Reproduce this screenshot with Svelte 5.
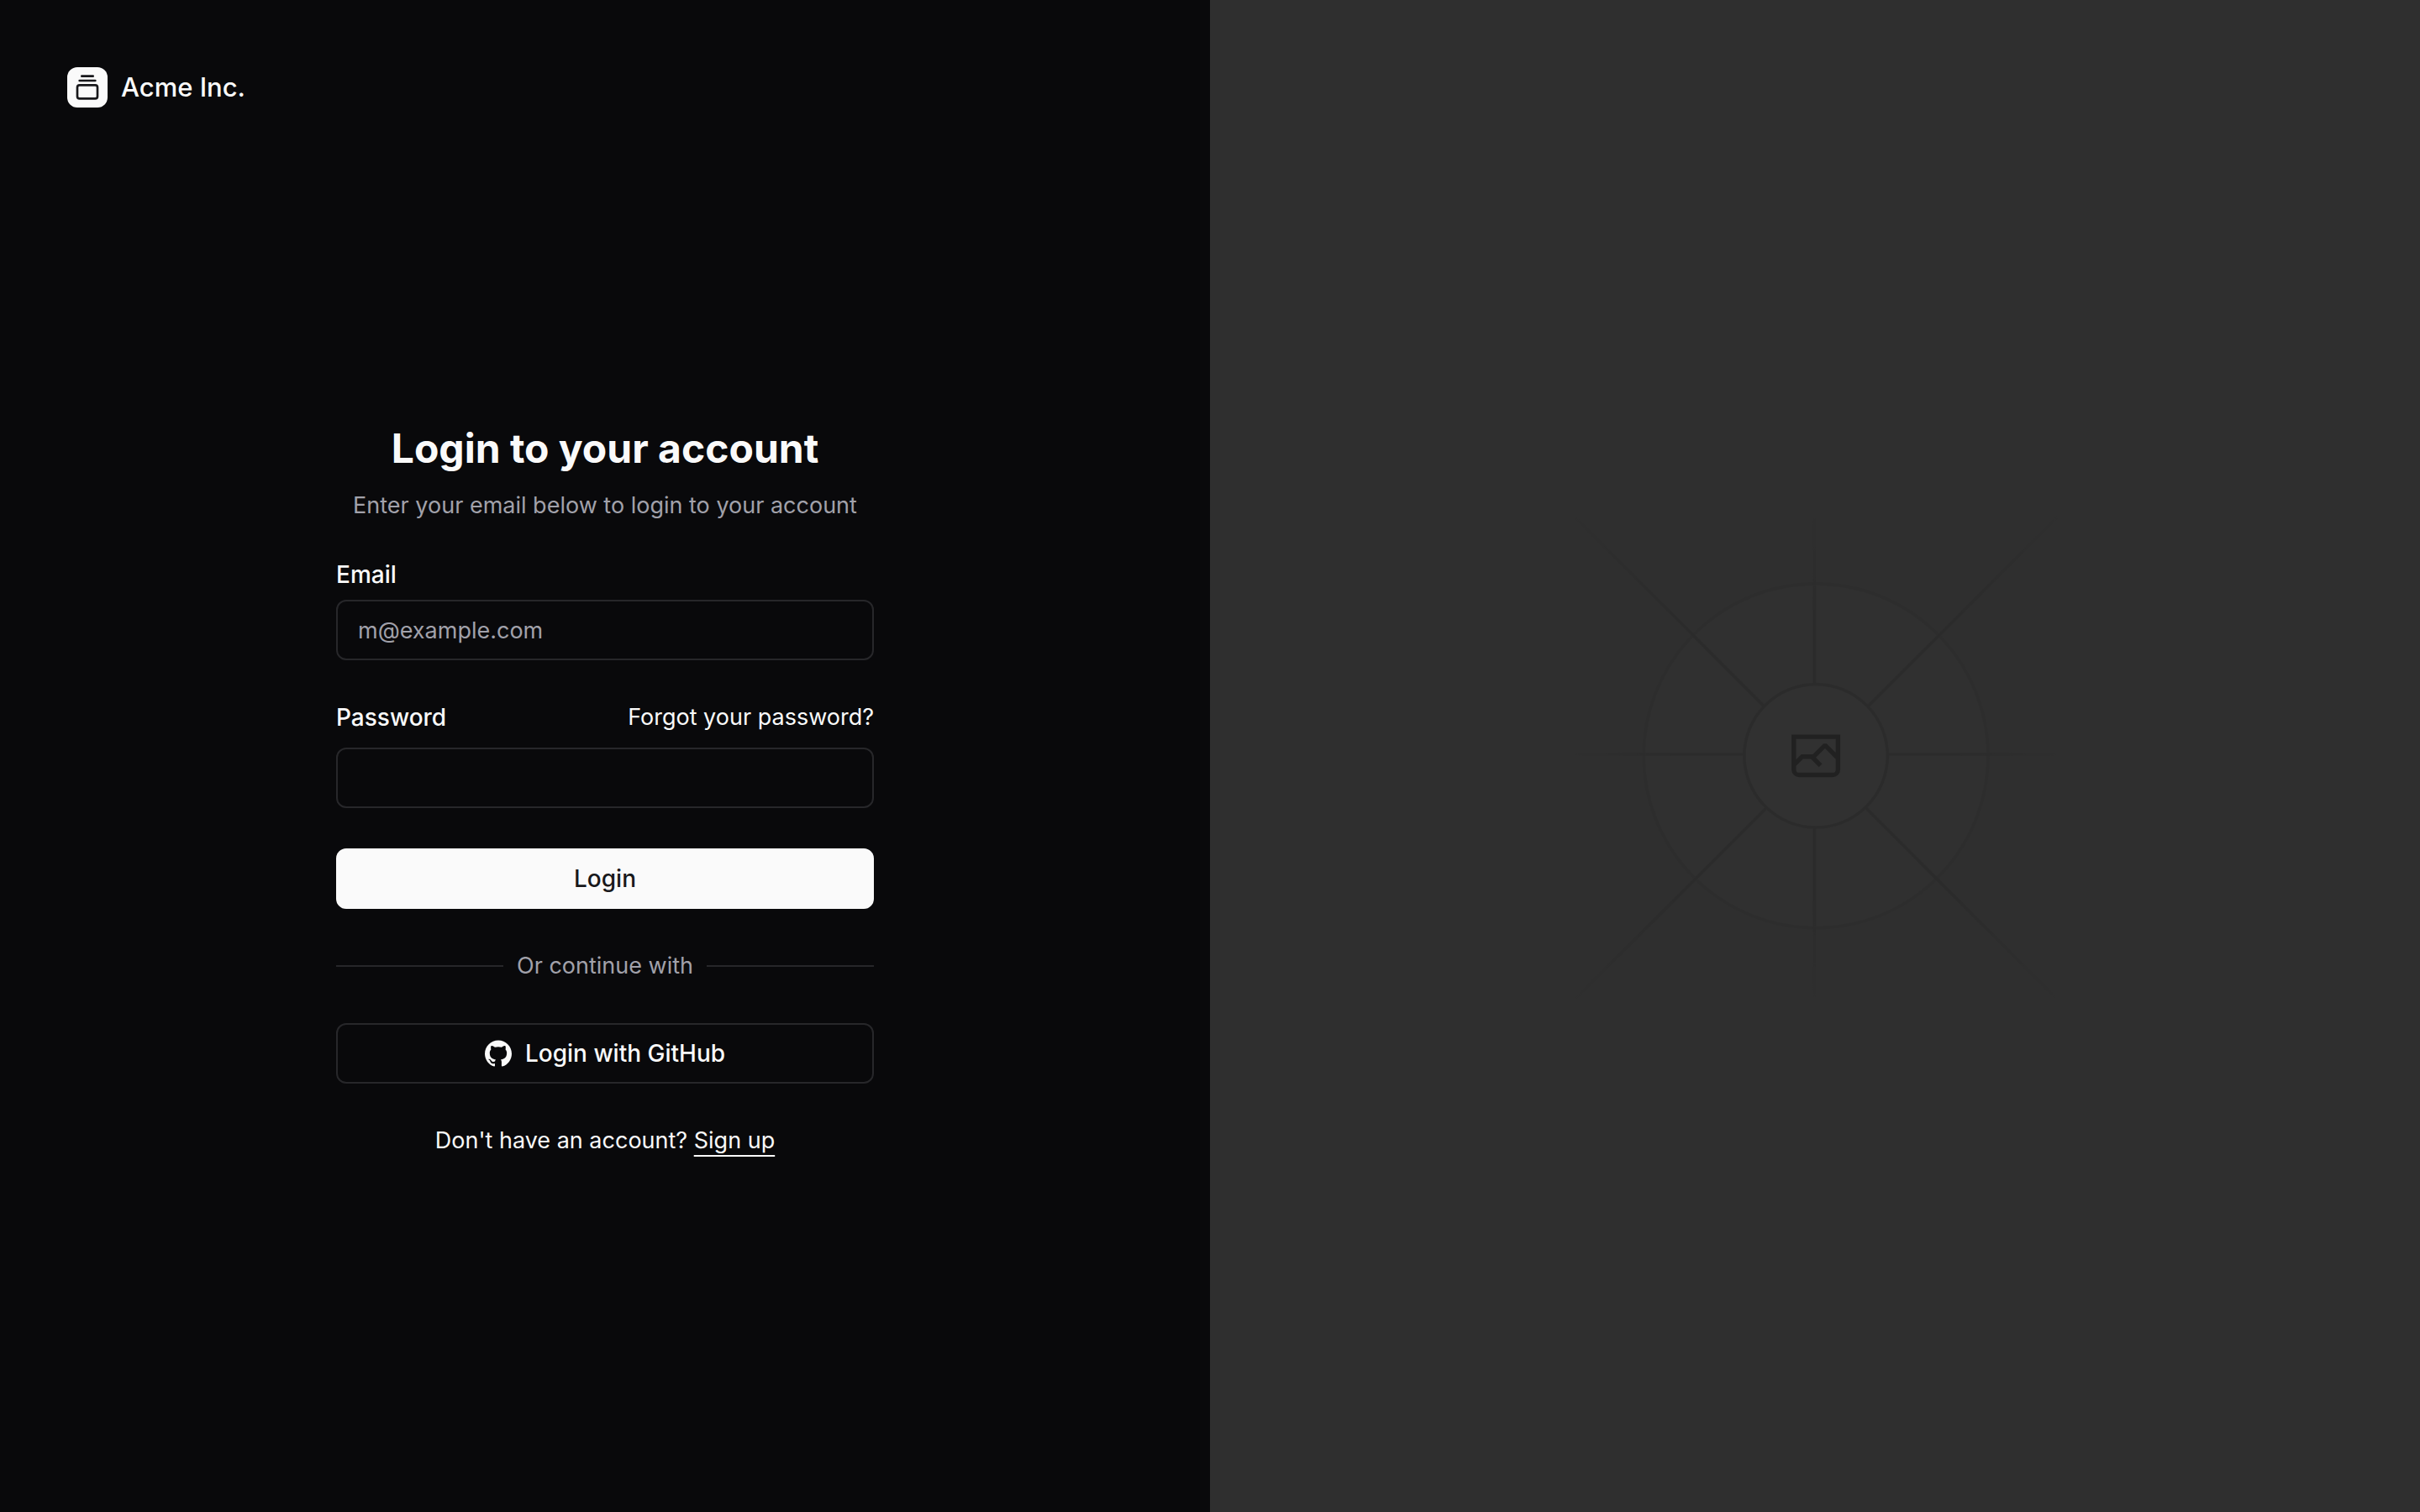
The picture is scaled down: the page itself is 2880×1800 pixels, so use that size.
<script>
  let email = $state('');
  let password = $state('');

  const fade = [
    [0, 0],
    [0.208, 1],
    [0.792, 1],
    [1, 0]
  ];
  const gradients = [
    { id: 'ray-rise', x1: 554.061, y1: 0.083, x2: -0.48, y2: 0.087 },
    { id: 'ray-across', x1: 796.912, y1: 599.963, x2: 404.507, y2: 599.965 },
    { id: 'ray-down', x1: 600.792, y1: 403.677, x2: 600.794, y2: 796.082 },
    { id: 'ray-fall', x1: 404.85, y1: 403.903, x2: 796.972, y2: 796.02 }
  ];
</script>

<div class="page">
  <div class="panel">
    <header>
      <a class="brand" href="#home">
        <span class="mark">
          <svg viewBox="0 0 24 24" fill="none" stroke="currentColor" stroke-width="2" stroke-linecap="round" stroke-linejoin="round" aria-hidden="true">
            <path d="M7 2h10" />
            <path d="M5 6h14" />
            <rect width="18" height="12" x="3" y="10" rx="2" />
          </svg>
        </span>
        Acme Inc.
      </a>
    </header>

    <main>
      <form onsubmit={(e) => e.preventDefault()}>
        <div class="intro">
          <h1>Login to your account</h1>
          <p>Enter your email below to login to your account</p>
        </div>

        <div class="field">
          <label for="email">Email</label>
          <input id="email" type="email" placeholder="m@example.com" bind:value={email} />
        </div>

        <div class="field">
          <div class="row">
            <label for="password">Password</label>
            <a href="#forgot">Forgot your password?</a>
          </div>
          <input id="password" type="password" bind:value={password} />
        </div>

        <button class="primary" type="submit">Login</button>

        <div class="divider"><span>Or continue with</span></div>

        <button class="outline" type="button">
          <svg viewBox="0 0 24 24" aria-hidden="true">
            <path fill="currentColor" d="M12 .297c-6.63 0-12 5.373-12 12 0 5.303 3.438 9.8 8.205 11.385.6.113.82-.258.82-.577 0-.285-.01-1.04-.015-2.04-3.338.724-4.042-1.61-4.042-1.61C4.422 18.07 3.633 17.7 3.633 17.7c-1.087-.744.084-.729.084-.729 1.205.084 1.838 1.236 1.838 1.236 1.07 1.835 2.809 1.305 3.495.998.108-.776.417-1.305.76-1.605-2.665-.3-5.466-1.332-5.466-5.93 0-1.31.465-2.38 1.235-3.22-.135-.303-.54-1.523.105-3.176 0 0 1.005-.322 3.3 1.23.96-.267 1.98-.399 3-.405 1.02.006 2.04.138 3 .405 2.28-1.552 3.285-1.23 3.285-1.23.645 1.653.24 2.873.12 3.176.765.84 1.23 1.91 1.23 3.22 0 4.61-2.805 5.625-5.475 5.92.42.36.81 1.096.81 2.22 0 1.606-.015 2.896-.015 3.286 0 .315.21.69.825.57C20.565 22.092 24 17.592 24 12.297c0-6.627-5.373-12-12-12" />
          </svg>
          Login with GitHub
        </button>

        <p class="signup">Don't have an account? <a href="#signup">Sign up</a></p>
      </form>
    </main>
  </div>

  <div class="cover">
    <svg viewBox="0 0 1200 1200" preserveAspectRatio="xMidYMid slice" fill="none" role="img" aria-label="Placeholder">
      <defs>
        {#each gradients as g (g.id)}
          <linearGradient id={g.id} x1={g.x1} y1={g.y1} x2={g.x2} y2={g.y2} gradientUnits="userSpaceOnUse">
            {#each fade as [offset, opacity]}
              <stop {offset} stop-color="#c9c9c9" stop-opacity={opacity} />
            {/each}
          </linearGradient>
        {/each}
      </defs>
      <rect width="1200" height="1200" fill="#eaeaea" />
      <g opacity=".5" stroke-width="2.418">
        <circle cx="600.709" cy="599.88" r="136.62" fill="#fafafa" stroke="#c9c9c9" opacity=".5" />
        <path stroke="url(#ray-rise)" d="M0-1.209h553.581" transform="scale(1 -1) rotate(45 1163.11 91.165)" />
        <path stroke="url(#ray-across)" d="M404.846 598.671h391.726" />
        <path stroke="url(#ray-down)" d="M599.5 795.742V404.017" />
        <path stroke="url(#ray-fall)" d="m795.717 796.597-391.441-391.44" />
        <circle cx="600.709" cy="599.88" r="56.824" fill="#fff" />
        <path fill="#666" fill-rule="evenodd" d="M616.426 586.58h-31.434v16.176l3.553-3.554.531-.531h9.068l.074-.074 8.463-8.463h2.565l7.18 7.181V586.58Zm-15.715 14.654 3.698 3.699 1.283 1.282-2.565 2.565-1.282-1.283-5.2-5.199h-6.066l-5.514 5.514-.073.073v2.876a2.418 2.418 0 0 0 2.418 2.418h26.598a2.418 2.418 0 0 0 2.418-2.418v-8.317l-8.463-8.463-7.181 7.181-.071.072Zm-19.347 5.442v4.085a6.045 6.045 0 0 0 6.046 6.045h26.598a6.044 6.044 0 0 0 6.045-6.045v-27.808h-38.689v23.723Z" />
        <circle cx="600.709" cy="599.88" r="56.824" stroke="#c9c9c9" />
      </g>
    </svg>
  </div>
</div>

<style>
  :global(body) {
    background: #09090b;
  }

  .page {
    display: grid;
    grid-template-columns: 1fr 1fr;
    min-height: 100vh;
    background: #09090b;
    color: #fafafa;
    font-family: Inter, 'Liberation Sans', sans-serif;
    font-size: 27px;
    line-height: 40px;
    -webkit-font-smoothing: antialiased;
  }

  .page *,
  .page {
    box-sizing: border-box;
  }

  .panel {
    display: flex;
    flex-direction: column;
    gap: 32px;
    padding: 80px;
  }

  header {
    display: flex;
  }

  .brand {
    display: flex;
    align-items: center;
    gap: 16px;
    font-size: 31px;
    line-height: 48px;
    font-weight: 500;
    text-decoration: none;
  }

  .mark {
    display: grid;
    place-items: center;
    width: 48px;
    height: 48px;
    border-radius: 12px;
    background: #fafafa;
    color: #18181b;
  }

  .mark svg,
  .outline svg {
    width: 32px;
    height: 32px;
  }

  main {
    flex: 1;
    display: flex;
    align-items: center;
    justify-content: center;
  }

  form {
    display: flex;
    flex-direction: column;
    gap: 48px;
    width: 100%;
    max-width: 640px;
  }

  .intro {
    display: flex;
    flex-direction: column;
    gap: 16px;
    text-align: center;
  }

  h1,
  p {
    margin: 0;
  }

  h1 {
    font-size: 48px;
    line-height: 64px;
    font-weight: 700;
  }

  .intro p,
  .divider {
    color: #a1a1aa;
  }

  .field {
    display: flex;
    flex-direction: column;
    gap: 16px;
  }

  .row {
    display: flex;
    align-items: center;
    justify-content: space-between;
  }

  label {
    font-size: 28px;
    line-height: 28px;
    font-weight: 500;
  }

  a {
    color: inherit;
    text-decoration: none;
  }

  input,
  button {
    width: 100%;
    height: 72px;
    margin: 0;
    border: 2px solid #27272a;
    border-radius: 12px;
    background: transparent;
    color: inherit;
    font: inherit;
  }

  input {
    padding: 0 24px;
  }

  input::placeholder {
    color: #a1a1aa;
    opacity: 1;
  }

  button {
    display: flex;
    align-items: center;
    justify-content: center;
    gap: 16px;
    font-size: 28px;
    font-weight: 500;
    cursor: pointer;
  }

  .primary {
    border-color: #fafafa;
    background: #fafafa;
    color: #18181b;
  }

  .divider {
    display: flex;
    align-items: center;
    gap: 16px;
  }

  .divider::before,
  .divider::after {
    content: '';
    flex: 1;
    height: 2px;
    background: #27272a;
  }

  .signup {
    text-align: center;
  }

  .signup a {
    text-decoration: underline;
    text-decoration-thickness: 2px;
    text-underline-offset: 8px;
  }

  .cover {
    position: relative;
    overflow: hidden;
    background: #27272a;
  }

  .cover svg {
    position: absolute;
    inset: 0;
    width: 100%;
    height: 100%;
    filter: brightness(0.2) grayscale(1);
  }
</style>
